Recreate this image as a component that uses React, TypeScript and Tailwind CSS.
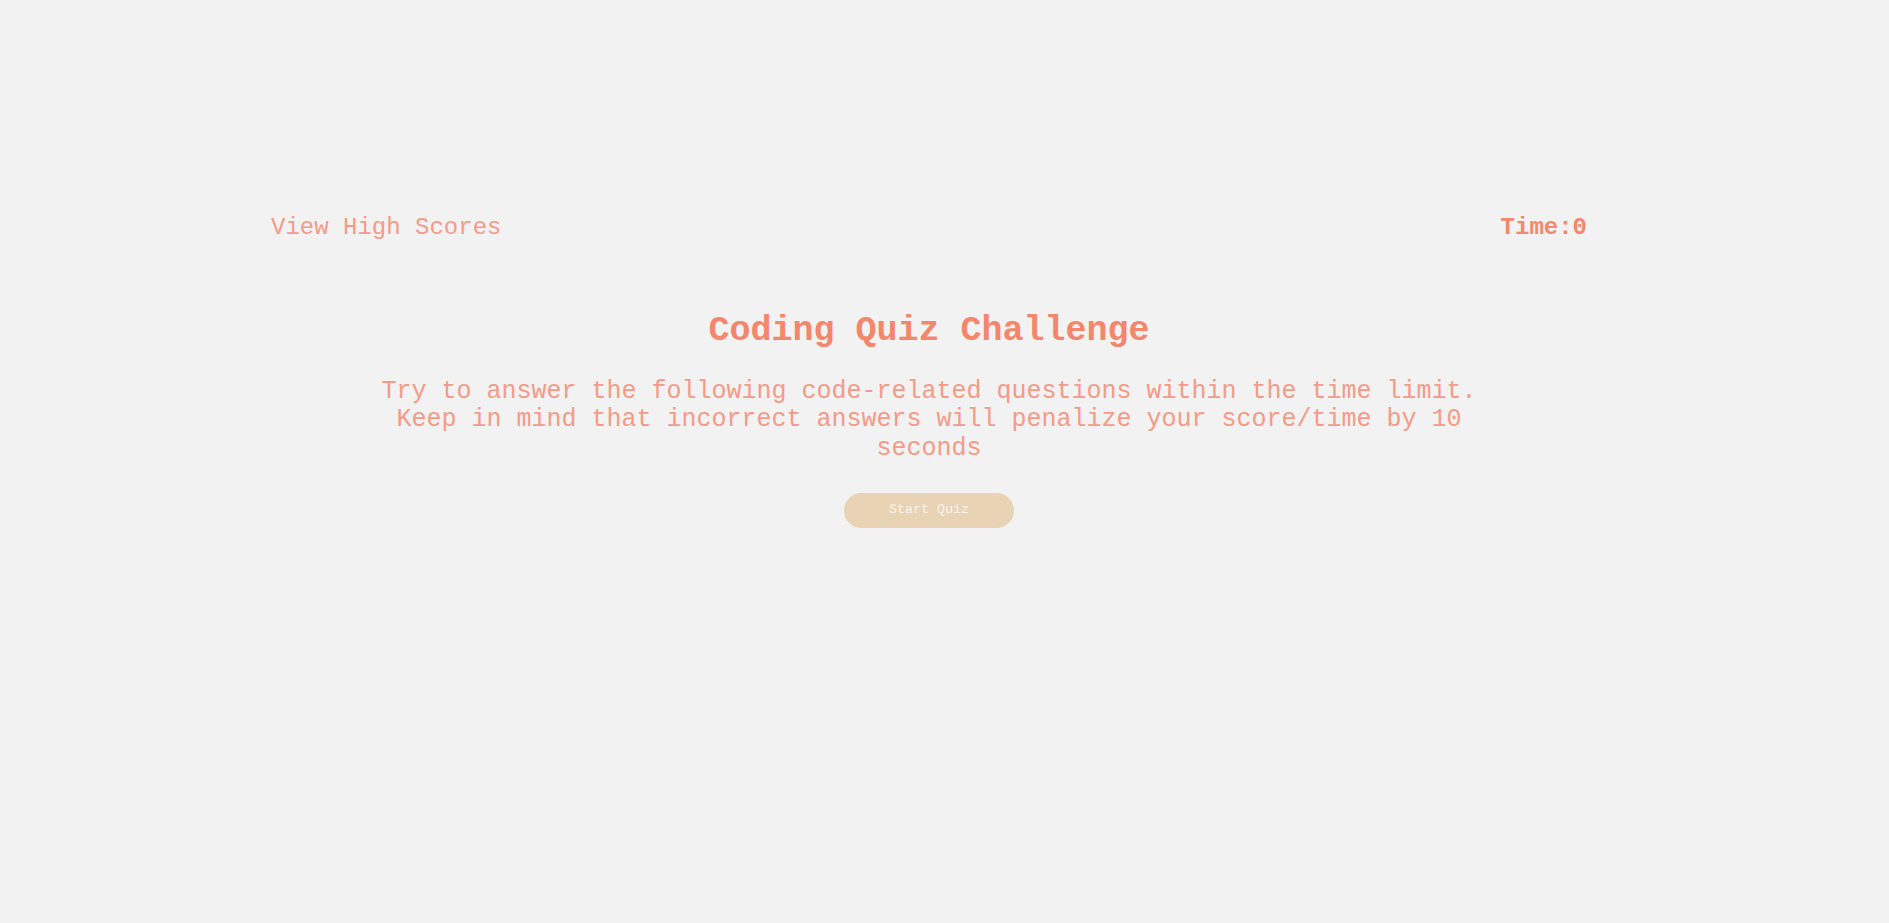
import React from "react";

export default function App() {
  return (
    <div
      className="min-h-screen w-full bg-[#f2f2f2] text-[#f4876c]"
      style={{ fontFamily: '"Liberation Mono", "Courier New", monospace' }}
    >
      <div className="pl-[271px] pt-[214px]">
        <div className="w-[1316px] flex flex-col">
          <header className="flex items-center justify-between text-[24px] leading-[27px]">
            <a className="text-[#f59a87] cursor-pointer">View High Scores</a>
            <span className="font-bold text-[#f4876c]">Time:0</span>
          </header>
          <main className="flex flex-col items-center">
            <h1 className="mt-[70px] text-[35px] leading-[40px] font-bold text-[#f4866b]">
              Coding Quiz Challenge
            </h1>
            <p className="mt-[27px] w-[1120px] text-center text-[25px] leading-[28.3px] text-[#f59a87]">
              Try to answer the following code-related questions within the time limit. Keep in mind that incorrect answers will penalize your score/time by 10 seconds
            </p>
            <button className="mt-[30px] h-[35px] w-[170px] rounded-full bg-[#e8d3b4] text-[13.333px] text-[#fbf4e8]">
              Start Quiz
            </button>
          </main>
        </div>
      </div>
    </div>
  );
}
